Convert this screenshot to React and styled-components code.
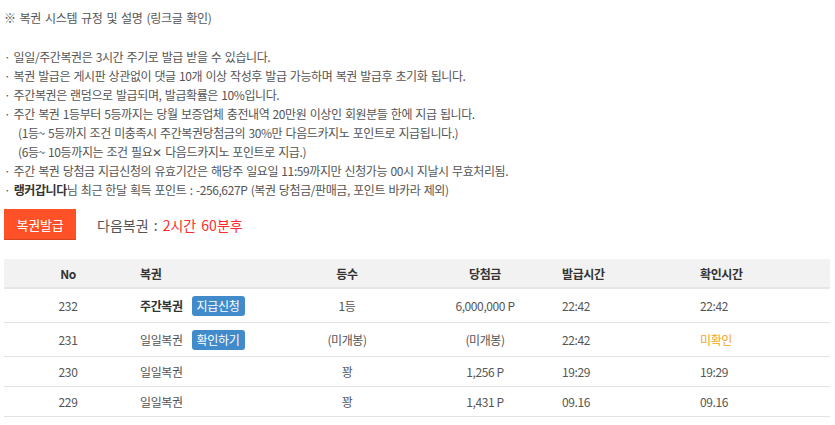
import React from 'react';
import styled, { createGlobalStyle } from 'styled-components';

const GlobalStyle = createGlobalStyle`
  body {
    margin: 0;
    background: #fff;
    font-family: "Noto Sans CJK KR", "Noto Sans", sans-serif;
    color: #555;
  }
`;

const Page = styled.div`
  padding: 8px 5px 0 4px;
  width: 826px;
`;

const Title = styled.div`
  font-size: 12px;
  line-height: 19px;
  letter-spacing: -0.3px;
  word-spacing: 1.5px;
  color: #555;
`;

const Notes = styled.ul`
  list-style: none;
  margin: 20px 0 0;
  padding: 0;
`;

const Note = styled.li`
  font-size: 12px;
  line-height: 19px;
  letter-spacing: -0.4px;
  word-spacing: 1px;
  color: #555;
  white-space: nowrap;
  padding-left: ${p => (p.$indent ? '14px' : '0')};
`;

const Strong = styled.b`
  color: #333;
  font-weight: 700;
`;

const ActionRow = styled.div`
  display: flex;
  align-items: center;
  gap: 21px;
  margin-top: 10px;
`;

const IssueButton = styled.button`
  width: 72px;
  height: 31px;
  border: 0;
  border-bottom: 1px solid #d8431f;
  background: #ff5127;
  color: #fff;
  font-family: inherit;
  font-size: 13px;
  letter-spacing: -0.2px;
  padding: 0;
  cursor: pointer;
`;

const NextInfo = styled.div`
  font-size: 14px;
  color: #555;
  letter-spacing: 0;
  word-spacing: 2px;
`;

const Red = styled.span`
  color: #ff2b2b;
`;

const Table = styled.div`
  margin-top: 19px;
  width: 826px;
`;

const Row = styled.div`
  display: grid;
  grid-template-columns: 128px 148px 134px 142px 138px 136px;
  align-items: center;
  height: ${p => p.$h}px;
  background: ${p => (p.$head ? '#f2f2f2' : '#fff')};
  border-bottom: ${p => (p.$head ? '2px solid #e6e6e6' : '1px solid #e2e2e2')};
  box-sizing: border-box;
`;

const Cell = styled.div`
  font-size: 12px;
  letter-spacing: -0.4px;
  text-align: ${p => p.$align || 'center'};
  padding-left: ${p => (p.$align === 'left' ? p.$pad || 6 : 0)}px;
  color: ${p => p.$color || (p.$head ? '#333' : '#555')};
  font-weight: ${p => (p.$head ? 700 : 400)};
  display: flex;
  align-items: center;
  justify-content: ${p => (p.$align === 'left' ? 'flex-start' : 'center')};
  gap: 9px;
`;

const TicketName = styled.span`
  font-weight: ${p => (p.$bold ? 700 : 400)};
  color: ${p => (p.$bold ? '#333' : '#555')};
`;

const SmallButton = styled.span`
  display: inline-block;
  background: #428bca;
  color: #fff;
  border-radius: 3px;
  font-size: 12px;
  font-weight: 400;
  line-height: 20px;
  height: 20px;
  padding: 0 5px;
  letter-spacing: -0.3px;
`;

const notes = [
  '· 일일/주간복권은 3시간 주기로 발급 받을 수 있습니다.',
  '· 복권 발급은 게시판 상관없이 댓글 10개 이상 작성후 발급 가능하며 복권 발급후 초기화 됩니다.',
  '· 주간복권은 랜덤으로 발급되며, 발급확률은 10%입니다.',
  '· 주간 복권 1등부터 5등까지는 당월 보증업체 충전내역 20만원 이상인 회원분들 한에 지급 됩니다.',
];

const rows = [
  { no: 232, name: '주간복권', bold: true, btn: '지급신청', rank: '1등', prize: '6,000,000 P', issued: '22:42', checked: '22:42', h: 34 },
  { no: 231, name: '일일복권', btn: '확인하기', rank: '(미개봉)', prize: '(미개봉)', issued: '22:42', checked: '미확인', warn: true, h: 34 },
  { no: 230, name: '일일복권', rank: '꽝', prize: '1,256 P', issued: '19:29', checked: '19:29', h: 30 },
  { no: 229, name: '일일복권', rank: '꽝', prize: '1,431 P', issued: '09.16', checked: '09.16', h: 30 },
];

export default function App() {
  return (
    <Page>
      <GlobalStyle />
      <Title>※ 복권 시스템 규정 및 설명 (링크글 확인)</Title>
      <Notes>
        {notes.map((n, i) => (
          <Note key={i}>{n}</Note>
        ))}
        <Note $indent>(1등~ 5등까지 조건 미충족시 주간복권당첨금의 30%만 다음드카지노 포인트로 지급됩니다.)</Note>
        <Note $indent>(6등~ 10등까지는 조건 필요✕ 다음드카지노 포인트로 지급.)</Note>
        <Note>· 주간 복권 당첨금 지급신청의 유효기간은 해당주 일요일 11:59까지만 신청가능 00시 지날시 무효처리됨.</Note>
        <Note>· <Strong>랭커갑니다</Strong>님 최근 한달 획득 포인트 : -256,627P (복권 당첨금/판매금, 포인트 바카라 제외)</Note>
      </Notes>

      <ActionRow>
        <IssueButton>복권발급</IssueButton>
        <NextInfo>다음복권 : <Red>2시간 60분후</Red></NextInfo>
      </ActionRow>

      <Table>
        <Row $head $h={30}>
          <Cell $head>No</Cell>
          <Cell $head $align="left" $pad={8}>복권</Cell>
          <Cell $head>등수</Cell>
          <Cell $head>당첨금</Cell>
          <Cell $head $align="left">발급시간</Cell>
          <Cell $head $align="left">확인시간</Cell>
        </Row>
        {rows.map(r => (
          <Row key={r.no} $h={r.h}>
            <Cell>{r.no}</Cell>
            <Cell $align="left" $pad={8}>
              <TicketName $bold={r.bold}>{r.name}</TicketName>
              {r.btn && <SmallButton>{r.btn}</SmallButton>}
            </Cell>
            <Cell>{r.rank}</Cell>
            <Cell>{r.prize}</Cell>
            <Cell $align="left">{r.issued}</Cell>
            <Cell $align="left" $color={r.warn ? '#f5a623' : undefined}>{r.checked}</Cell>
          </Row>
        ))}
      </Table>
    </Page>
  );
}
